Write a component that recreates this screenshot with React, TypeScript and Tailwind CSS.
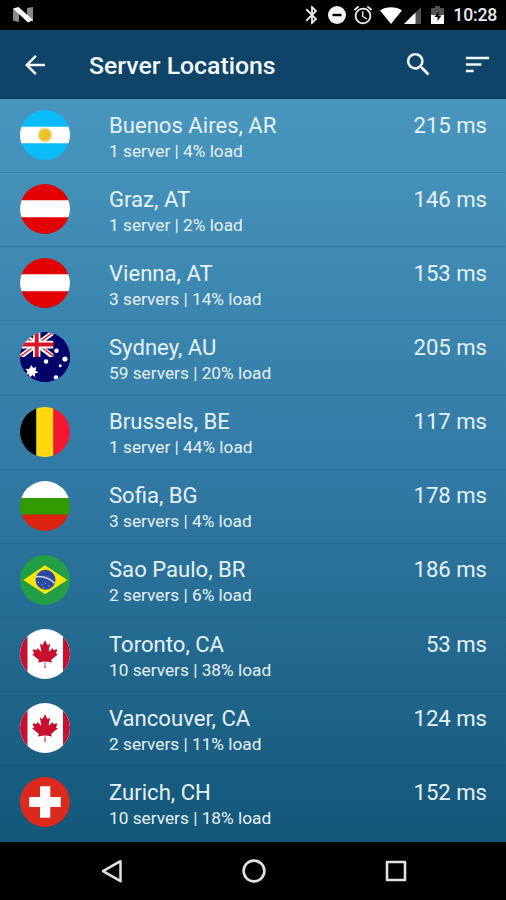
import { type ReactNode } from 'react'
import { MdAlarm, MdArrowBack, MdBluetooth, MdSearch, MdSort } from 'react-icons/md'

type Country = 'AR' | 'AT' | 'AU' | 'BE' | 'BG' | 'BR' | 'CA' | 'CH'

interface Server {
  city: string
  country: Country
  servers: number
  load: number
  ping: number
}

const SERVERS: Server[] = [
  { city: 'Buenos Aires', country: 'AR', servers: 1, load: 4, ping: 215 },
  { city: 'Graz', country: 'AT', servers: 1, load: 2, ping: 146 },
  { city: 'Vienna', country: 'AT', servers: 3, load: 14, ping: 153 },
  { city: 'Sydney', country: 'AU', servers: 59, load: 20, ping: 205 },
  { city: 'Brussels', country: 'BE', servers: 1, load: 44, ping: 117 },
  { city: 'Sofia', country: 'BG', servers: 3, load: 4, ping: 178 },
  { city: 'Sao Paulo', country: 'BR', servers: 2, load: 6, ping: 186 },
  { city: 'Toronto', country: 'CA', servers: 10, load: 38, ping: 53 },
  { city: 'Vancouver', country: 'CA', servers: 2, load: 11, ping: 124 },
  { city: 'Zurich', country: 'CH', servers: 10, load: 18, ping: 152 },
]

// Flags are drawn on a 50x50 canvas and cut to a circle by the wrapper
const FLAGS: Record<Country, ReactNode> = {
  AR: (
    <>
      <path fill="#0bbcfb" d="M0 0h50v50H0z" />
      <path fill="#fff" d="M0 16.7h50v16.6H0z" />
      <circle cx="25" cy="25" r="7.5" fill="#f5e0a0" />
      <circle cx="25" cy="25" r="6" fill="#ecc32c" />
    </>
  ),
  AT: (
    <>
      <path fill="#e20000" d="M0 0h50v50H0z" />
      <path fill="#fff" d="M0 16.3h50v17H0z" />
    </>
  ),
  AU: (
    <>
      <path fill="#00006b" d="M0 0h50v50H0z" />
      <path stroke="#fff" strokeWidth="4.8" d="M0 0l33.5 25M33.5 0L0 25" />
      <path stroke="#d8202c" strokeWidth="1.5" d="M0 .8l16.5 12.3M33.5 0L16.5 12.5M0 25l16.5-12.5M33.5 24.4L17 12" />
      <path fill="#fff" d="M13 0h7.4v25H13zM0 8.8h33.5v7.6H0z" />
      <path fill="#dc1624" d="M14.8 0h3.9v25h-3.9zM0 10.6h33.5v4H0z" />
      <path fill="#00006b" d="M33.5 0H50v25H33.5zM0 25h50v25H0z" />
      <path
        fill="#fff"
        d="M11.5 33l1.6 3.1 3.3-1-.9 3.4 2.8 2-3.4 1 .2 3.6-2.7-2-2.5 2.7-.9-3.3-3.5-.1 2.1-2.7-2-3 3.4.2z"
      />
      <g fill="#fff">
        <circle cx="36.5" cy="18.8" r="2.3" />
        <circle cx="45" cy="27" r="2.6" />
        <circle cx="26" cy="29.5" r="2.3" />
        <circle cx="40.2" cy="33.8" r="1.5" />
        <circle cx="36" cy="45.5" r="2.3" />
      </g>
    </>
  ),
  BE: (
    <>
      <path d="M0 0h16.5v50H0z" />
      <path fill="#ffd90c" d="M16.3 0h17.2v50H16.3z" />
      <path fill="#f31830" d="M33.3 0H50v50H33.3z" />
    </>
  ),
  BG: (
    <>
      <path fill="#fff" d="M0 0h50v17H0z" />
      <path fill="#339900" d="M0 17h50v17H0z" />
      <path fill="#dc2310" d="M0 33.5h50V50H0z" />
    </>
  ),
  BR: (
    <>
      <path fill="#229e45" d="M0 0h50v50H0z" />
      <path fill="#f8e509" d="M3.3 25L25 10.3 47.3 25 25 39.3z" />
      <circle cx="25.5" cy="24.8" r="10" fill="#2b49a3" />
      <path fill="none" stroke="#cdd9ea" strokeWidth="1.6" d="M16 21.7c7-.8 14 1.8 18.6 6.6" />
      <path fill="#aebfe0" d="M18 27h1v1h-1zM21.5 29.5h1v1h-1zM25 28h1v1h-1zM28.5 30.5h1v1h-1zM23 32h1v1h-1z" />
    </>
  ),
  CA: (
    <>
      <path fill="#fff" d="M0 0h50v50H0z" />
      <path fill="#c8102e" d="M0 0h7.5v50H0zM43 0h7v50h-7z" />
      <path
        fill="#c8102e"
        transform="translate(25 25) scale(.0069)"
        d="m-90 2030 45-863a95 95 0 0 0-111-98l-859 151 116-320a65 65 0 0 0-20-73l-941-762 212-99a65 65 0 0 0 34-79l-186-572 542 115a65 65 0 0 0 73-38l105-247 423 454a65 65 0 0 0 111-57l-204-1052 327 189a65 65 0 0 0 91-27l332-652 332 652a65 65 0 0 0 91 27l327-189-204 1052a65 65 0 0 0 111 57l423-454 105 247a65 65 0 0 0 73 38l542-115-186 572a65 65 0 0 0 34 79l212 99-941 762a65 65 0 0 0-20 73l116 320-859-151a95 95 0 0 0-111 98l45 863z"
      />
    </>
  ),
  CH: (
    <>
      <path fill="#db291b" d="M0 0h50v50H0z" />
      <path fill="#fff" d="M20 9.3h10.3v10.6h10.5v10H30.3v10.8H20V29.9H9.2v-10H20z" />
    </>
  ),
}

const StatusBar = () => (
  <div className="flex h-[30px] shrink-0 items-center bg-black pr-[9px] pl-[13px] text-[#ececec]">
    <svg viewBox="0 0 20 16" className="h-4 w-5">
      <path fill="#8a8a8a" d="M0 1.5l6 4V15l-6-1.5zM14 1l6-1v14.5l-6-4z" />
      <path fill="#fff" d="M0 1.5L5.5 0 20 13l-5 2.5z" />
    </svg>
    <div className="ml-auto flex items-center">
      <MdBluetooth className="h-[22px] w-[22px]" />
      <svg viewBox="0 0 18 18" className="ml-[5px] h-[18px] w-[18px]">
        <circle cx="9" cy="9" r="9" fill="#f4f4f4" />
        <path d="M4.5 7.8h9v2.4h-9z" />
      </svg>
      <MdAlarm className="ml-[6px] h-[22px] w-[22px]" />
      <svg viewBox="0 0 22 17" className="ml-[6px] h-[17px] w-[22px]">
        <path fill="#fff" d="M11 17L0 3.4C6-.9 16-.9 22 3.4z" />
      </svg>
      <svg viewBox="0 0 17 17" className="ml-[2px] h-[17px] w-[17px]">
        <path fill="#505050" d="M0 17L17 0v17z" />
        <path fill="#fff" d="M0 17L11.5 5.5V17z" />
      </svg>
      <svg viewBox="0 0 13 18" className="ml-[10px] h-[18px] w-[13px]">
        <path fill="#505050" d="M4 0h5v2h4v8H0V2h4z" />
        <path fill="#fff" d="M0 9h13v9H0z" />
        <path d="M7.5 5.5L3.5 11h3v4l4-5.5h-3z" />
      </svg>
      <span className="ml-[9px] pt-[2px] text-[17.6px] leading-none font-medium tracking-[-0.2px] whitespace-nowrap">
        10:28
      </span>
    </div>
  </div>
)

const AppBar = () => (
  <header className="flex h-[69px] shrink-0 items-center border-b-2 border-[#0d3c63] bg-[#0f4469] pt-[2px] pr-[13px] pl-5 text-[#f5f8fb]">
    <button aria-label="Back">
      <MdArrowBack className="h-[30px] w-[30px]" />
    </button>
    <h1 className="ml-[39px] pt-[3px] text-[24.8px] leading-none font-medium whitespace-nowrap">Server Locations</h1>
    <button aria-label="Search" className="ml-auto">
      <MdSearch className="h-[31px] w-[31px]" />
    </button>
    <button aria-label="Sort" className="ml-[28px]">
      <MdSort className="h-[31px] w-[31px]" />
    </button>
  </header>
)

const ServerRow = ({ city, country, servers, load, ping }: Server) => (
  <li className="flex h-[74.17px] border-b border-[#0f4c7a]/20 pr-[19px] pl-5 text-[#e6f1f8] last:border-transparent">
    <svg viewBox="0 0 50 50" className="mt-[11px] h-[50px] w-[50px] rounded-full">
      {FLAGS[country]}
    </svg>
    <div className="ml-[39px] pt-[10.5px] whitespace-nowrap">
      <div className="text-[22.1px] leading-[30px]">
        {city}, {country}
      </div>
      <div className="text-[17.25px] leading-[22px]">
        {servers} {servers === 1 ? 'server' : 'servers'} | {load}% load
      </div>
    </div>
    <div className="ml-auto pt-[10.5px] text-[22.1px] leading-[30px] whitespace-nowrap">{ping} ms</div>
  </li>
)

const NavBar = () => (
  <nav className="flex h-[58px] shrink-0 items-center bg-black pl-[101px] text-[#e2e2e2]">
    <svg viewBox="0 0 22 24" className="h-6 w-[22px]" fill="none" stroke="currentColor" strokeWidth="2.5" strokeLinejoin="round">
      <path d="M19.5 2.2v20L2 12.2z" />
    </svg>
    <svg viewBox="0 0 24 24" className="ml-[119px] h-6 w-6" fill="none" stroke="currentColor" strokeWidth="2.6">
      <circle cx="12" cy="12" r="10.4" />
    </svg>
    <svg viewBox="0 0 22 22" className="ml-[119px] h-[22px] w-[22px]" fill="none" stroke="currentColor" strokeWidth="2.6" strokeLinejoin="round">
      <path d="M2 2h18v18H2z" />
    </svg>
  </nav>
)

const App = () => (
  <div className="flex h-[900px] w-[506px] flex-col overflow-hidden bg-black font-['Roboto',sans-serif]">
    <StatusBar />
    <AppBar />
    <ul className="h-[743px] shrink-0 bg-linear-to-b from-[#4896bd] via-[#317aa5] to-[#125778]">
      {SERVERS.map((server) => (
        <ServerRow key={server.city} {...server} />
      ))}
    </ul>
    <NavBar />
  </div>
)

export default App
